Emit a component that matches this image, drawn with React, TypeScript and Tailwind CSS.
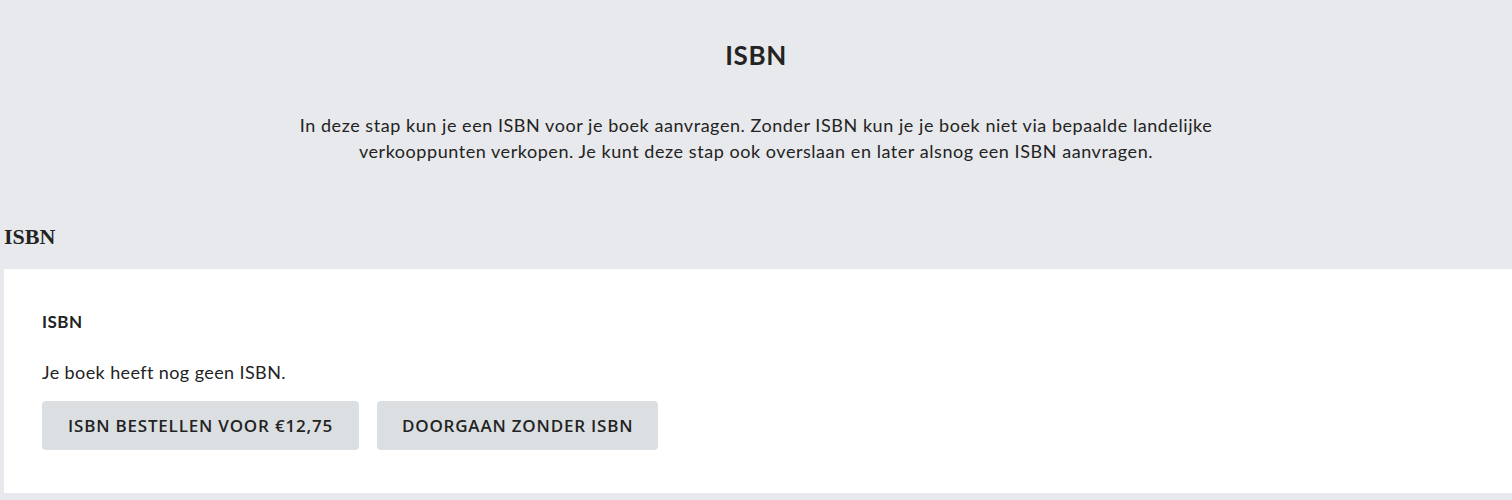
export default function App() {
  return (
    <div className="min-h-[500px] bg-[#e8e9ec] text-[#232323] font-['Lato',sans-serif] pb-[7px]">
      <div className="flex flex-col items-center pt-[38px]">
        <h1 className="text-[26px] font-bold leading-[34px] tracking-[0.6px]">ISBN</h1>
        <p className="mt-[40px] w-[940px] text-center text-[18px] leading-[26px] tracking-[0.55px]">
          In deze stap kun je een ISBN voor je boek aanvragen. Zonder ISBN kun je je boek niet via bepaalde landelijke
          verkooppunten verkopen. Je kunt deze stap ook overslaan en later alsnog een ISBN aanvragen.
        </p>
      </div>
      <h2 className="mt-[59px] px-[4px] font-['Liberation_Serif',serif] text-[22px] font-bold leading-[28px]">ISBN</h2>
      <div className="ml-[4px] mt-[18px] bg-white px-[38px] pt-[40px] pb-[43px]">
        <div className="text-[17px] font-bold leading-[26px] tracking-[0.5px]">ISBN</div>
        <p className="mt-[24px] text-[18px] leading-[26px] tracking-[0.4px]">Je boek heeft nog geen ISBN.</p>
        <div className="mt-[16px] flex gap-[18px]">
          <button className="h-[49px] rounded-[4px] bg-[#dcdfe2] px-[26px] font-['Open_Sans',sans-serif] text-[17px] font-semibold tracking-[0.8px]">
            ISBN BESTELLEN VOOR €12,75
          </button>
          <button className="h-[49px] rounded-[4px] bg-[#dcdfe2] px-[25px] font-['Open_Sans',sans-serif] text-[17px] font-semibold tracking-[0.8px]">
            DOORGAAN ZONDER ISBN
          </button>
        </div>
      </div>
    </div>
  )
}
